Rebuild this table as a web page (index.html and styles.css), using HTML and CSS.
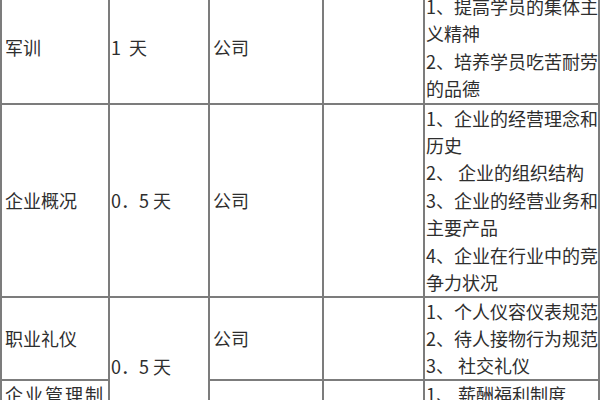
FILE: index.html
```html
<!DOCTYPE html>
<html lang="zh-CN">
<head>
<meta charset="utf-8">
<title>培训内容</title>
<link rel="stylesheet" href="styles.css">
</head>
<body>
<table class="plan">
  <colgroup>
    <col class="c1"><col class="c2"><col class="c3"><col class="c4"><col class="c5">
  </colgroup>
  <tr class="r1">
    <td class="name">军训</td>
    <td class="days">1&nbsp; 天</td>
    <td class="org">公司</td>
    <td></td>
    <td class="items">1、提高学员的集体主<br>义精神<br>2、培养学员吃苦耐劳<br>的品德</td>
  </tr>
  <tr class="r2">
    <td class="name">企业概况</td>
    <td class="days">0．5 天</td>
    <td class="org">公司</td>
    <td></td>
    <td class="items">1、企业的经营理念和<br>历史<br>2、 企业的组织结构<br>3、企业的经营业务和<br>主要产品<br>4、企业在行业中的竞<br>争力状况</td>
  </tr>
  <tr class="r3">
    <td class="name">职业礼仪</td>
    <td class="days" rowspan="2">0．5 天</td>
    <td class="org">公司</td>
    <td></td>
    <td class="items tight">1、个人仪容仪表规范<br>2、待人接物行为规范<br>3、 社交礼仪</td>
  </tr>
  <tr class="r4">
    <td class="name spread">企业管理制<br>度</td>
    <td class="org"></td>
    <td></td>
    <td class="items">1、 薪酬福利制度<br>2、 考勤制度</td>
  </tr>
</table>
</body>
</html>
```
FILE: styles.css
```css
html, body {
  margin: 0;
  padding: 0;
  background: #ffffff;
}
body {
  width: 600px;
  height: 400px;
  overflow: hidden;
}
.plan {
  border-collapse: collapse;
  table-layout: fixed;
  width: 598px;
  margin-top: -9px;
  margin-left: 0;
  font-family: "Noto Sans CJK SC", "Noto Sans", sans-serif;
  font-size: 18px;
  line-height: 27.4px;
  color: #2e2e2e;
}
.c1 { width: 108px; }
.c2 { width: 100px; }
.c3 { width: 114px; }
.c4 { width: 101px; }
.c5 { width: 175px; }
.plan td {
  border: 2px solid #7c7c7c;
  padding: 0 3px;
  vertical-align: middle;
  white-space: nowrap;
  overflow: hidden;
}
.plan td.days {
  padding: 0 0 0 1px;
}
.plan td.items {
  padding: 0 0 0 1px;
  vertical-align: top;
}
.plan td.tight {
  line-height: 26.8px;
}
.plan td.spread {
  letter-spacing: 2px;
  vertical-align: top;
}
```
